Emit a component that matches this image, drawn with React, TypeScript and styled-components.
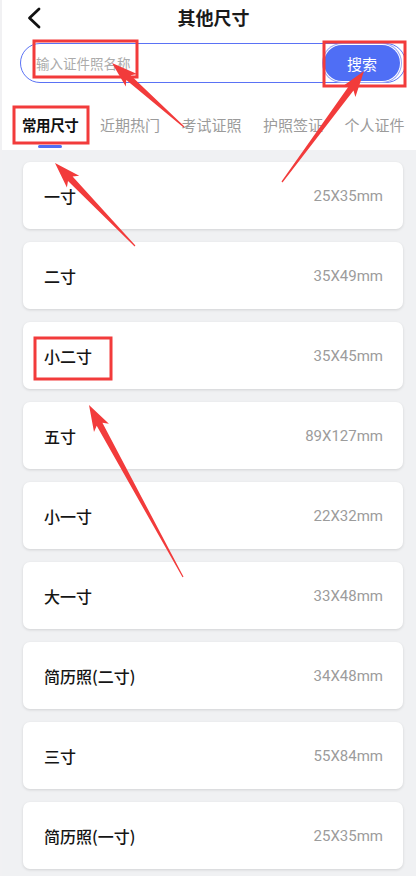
import React from "react";
import styled, { createGlobalStyle } from "styled-components";

const GlobalStyle = createGlobalStyle`
  html, body { margin: 0; padding: 0; background: #ffffff; }
  body { font-family: "Noto Sans CJK SC", "Noto Sans", sans-serif; }
  * { box-sizing: border-box; }
`;

const Page = styled.div`
  position: relative;
  width: 416px;
  min-height: 876px;
  display: flex;
  flex-direction: column;
  background: #ffffff;
  border-left: 2px solid #f1f1f3;
  overflow: hidden;
`;

const Header = styled.div`
  height: 33px;
  display: grid;
  grid-template-columns: 1fr auto 1fr;
  align-items: center;
  padding-left: 25px;
  padding-right: 16px;
`;

const BackButton = styled.div`
  display: flex;
  align-items: center;
  justify-self: start;
  margin-top: 2px;
`;

const Title = styled.div`
  font-size: 18px;
  font-weight: 700;
  color: #1a1a1a;
`;

const SearchBar = styled.div`
  margin: 10px 10px 0 18px;
  height: 40px;
  border: 1px solid #5a72f5;
  border-radius: 20px;
  display: flex;
  align-items: center;
  padding: 0 5px 0 15px;
`;

const SearchInput = styled.div`
  flex: 1;
  font-size: 13.5px;
  color: #ababab;
`;

const SearchButton = styled.div`
  width: 76px;
  height: 36px;
  border-radius: 18px;
  background: #4f6ef5;
  color: #ffffff;
  font-size: 15px;
  display: flex;
  align-items: center;
  justify-content: center;
  box-shadow: 0 0 0 1px #ffffff, 0 0 0 2px #9aa8f8;
`;

const Tabs = styled.div`
  display: flex;
  gap: 21.5px;
  padding: 31px 0 2px 20px;
  white-space: nowrap;
`;

const Tab = styled.div`
  display: flex;
  flex-direction: column;
  align-items: center;
  flex-shrink: 0;
`;

const TabLabel = styled.div<{ $active?: boolean }>`
  font-size: ${(p) => (p.$active ? "14.5px" : "15px")};
  line-height: 22px;
  font-weight: ${(p) => (p.$active ? 700 : 400)};
  color: ${(p) => (p.$active ? "#111111" : "#9b9b9b")};
  letter-spacing: ${(p) => (p.$active ? "-0.4px" : "0")};
`;

const TabLine = styled.div<{ $active?: boolean }>`
  margin-top: 9px;
  width: 24px;
  height: 3px;
  border-radius: 2px;
  background: ${(p) => (p.$active ? "#4f6ef5" : "transparent")};
`;

const List = styled.div`
  flex: 1;
  background: #f0f1f3;
  display: flex;
  flex-direction: column;
  gap: 13px;
  padding: 12px 13px 4px 21px;
`;

const Card = styled.div`
  height: 67px;
  background: #ffffff;
  border-radius: 7px;
  box-shadow: 0 1px 3px rgba(0, 0, 0, 0.13);
  display: flex;
  align-items: center;
  justify-content: space-between;
  padding: 0 20px 0 21px;
`;

const CardName = styled.div`
  font-size: 16px;
  font-weight: 500;
  color: #151515;
`;

const CardSize = styled.div`
  font-family: Roboto, "Noto Sans", sans-serif;
  font-size: 15px;
  color: #9c9c9c;
`;

const Overlay = styled.svg`
  position: absolute;
  left: 0;
  top: 0;
  width: 416px;
  height: 876px;
  pointer-events: none;
`;

const items: [string, string][] = [
  ["一寸", "25X35mm"],
  ["二寸", "35X49mm"],
  ["小二寸", "35X45mm"],
  ["五寸", "89X127mm"],
  ["小一寸", "22X32mm"],
  ["大一寸", "33X48mm"],
  ["简历照(二寸)", "34X48mm"],
  ["三寸", "55X84mm"],
  ["简历照(一寸)", "25X35mm"],
];

const tabs = ["常用尺寸", "近期热门", "考试证照", "护照签证", "个人证件"];

function arrowPoints(tx: number, ty: number, hx: number, hy: number) {
  const dx = hx - tx;
  const dy = hy - ty;
  const len = Math.hypot(dx, dy);
  const ux = dx / len;
  const uy = dy / len;
  const nx = -uy;
  const ny = ux;
  const headLen = 22;
  const neckX = hx - ux * headLen;
  const neckY = hy - uy * headLen;
  const barbX = hx - ux * (headLen + 4);
  const barbY = hy - uy * (headLen + 4);
  const tailW = 0.6;
  const shaftW = 3.2;
  const headW = 8.5;
  const pts: [number, number][] = [
    [tx + nx * tailW, ty + ny * tailW],
    [neckX + nx * shaftW, neckY + ny * shaftW],
    [barbX + nx * headW, barbY + ny * headW],
    [hx, hy],
    [barbX - nx * headW, barbY - ny * headW],
    [neckX - nx * shaftW, neckY - ny * shaftW],
    [tx - nx * tailW, ty - ny * tailW],
  ];
  return pts.map((p) => `${p[0].toFixed(1)},${p[1].toFixed(1)}`).join(" ");
}

const RED = "#f23b3b";

export default function App() {
  return (
    <>
      <GlobalStyle />
      <Page>
        <Header>
          <BackButton>
            <svg width="14" height="22" viewBox="0 0 14 22">
              <polyline
                points="12,2 2.5,11 12,20"
                fill="none"
                stroke="#111"
                strokeWidth="2.8"
                strokeLinecap="round"
                strokeLinejoin="round"
              />
            </svg>
          </BackButton>
          <Title>其他尺寸</Title>
          <div />
        </Header>
        <SearchBar>
          <SearchInput>输入证件照名称</SearchInput>
          <SearchButton>搜索</SearchButton>
        </SearchBar>
        <Tabs>
          {tabs.map((t, i) => (
            <Tab key={t}>
              <TabLabel $active={i === 0}>{t}</TabLabel>
              <TabLine $active={i === 0} />
            </Tab>
          ))}
        </Tabs>
        <List>
          {items.map(([name, size], i) => (
            <Card key={i}>
              <CardName>{name}</CardName>
              <CardSize>{size}</CardSize>
            </Card>
          ))}
        </List>
        <Overlay viewBox="0 0 416 876">
          <g fill="none" stroke={RED} strokeWidth="3">
            <rect x="32" y="41" width="103" height="36" />
            <rect x="322" y="42" width="81" height="44" />
            <rect x="12" y="107" width="74" height="36" />
            <rect x="33" y="338" width="76" height="41" />
          </g>
          <g fill={RED}>
            <polygon points={arrowPoints(182, 127, 110, 63)} />
            <polygon points={arrowPoints(280, 182, 362, 71)} />
            <polygon points={arrowPoints(133, 246, 53, 163)} />
            <polygon points={arrowPoints(181, 577, 87, 405)} />
          </g>
        </Overlay>
      </Page>
    </>
  );
}
